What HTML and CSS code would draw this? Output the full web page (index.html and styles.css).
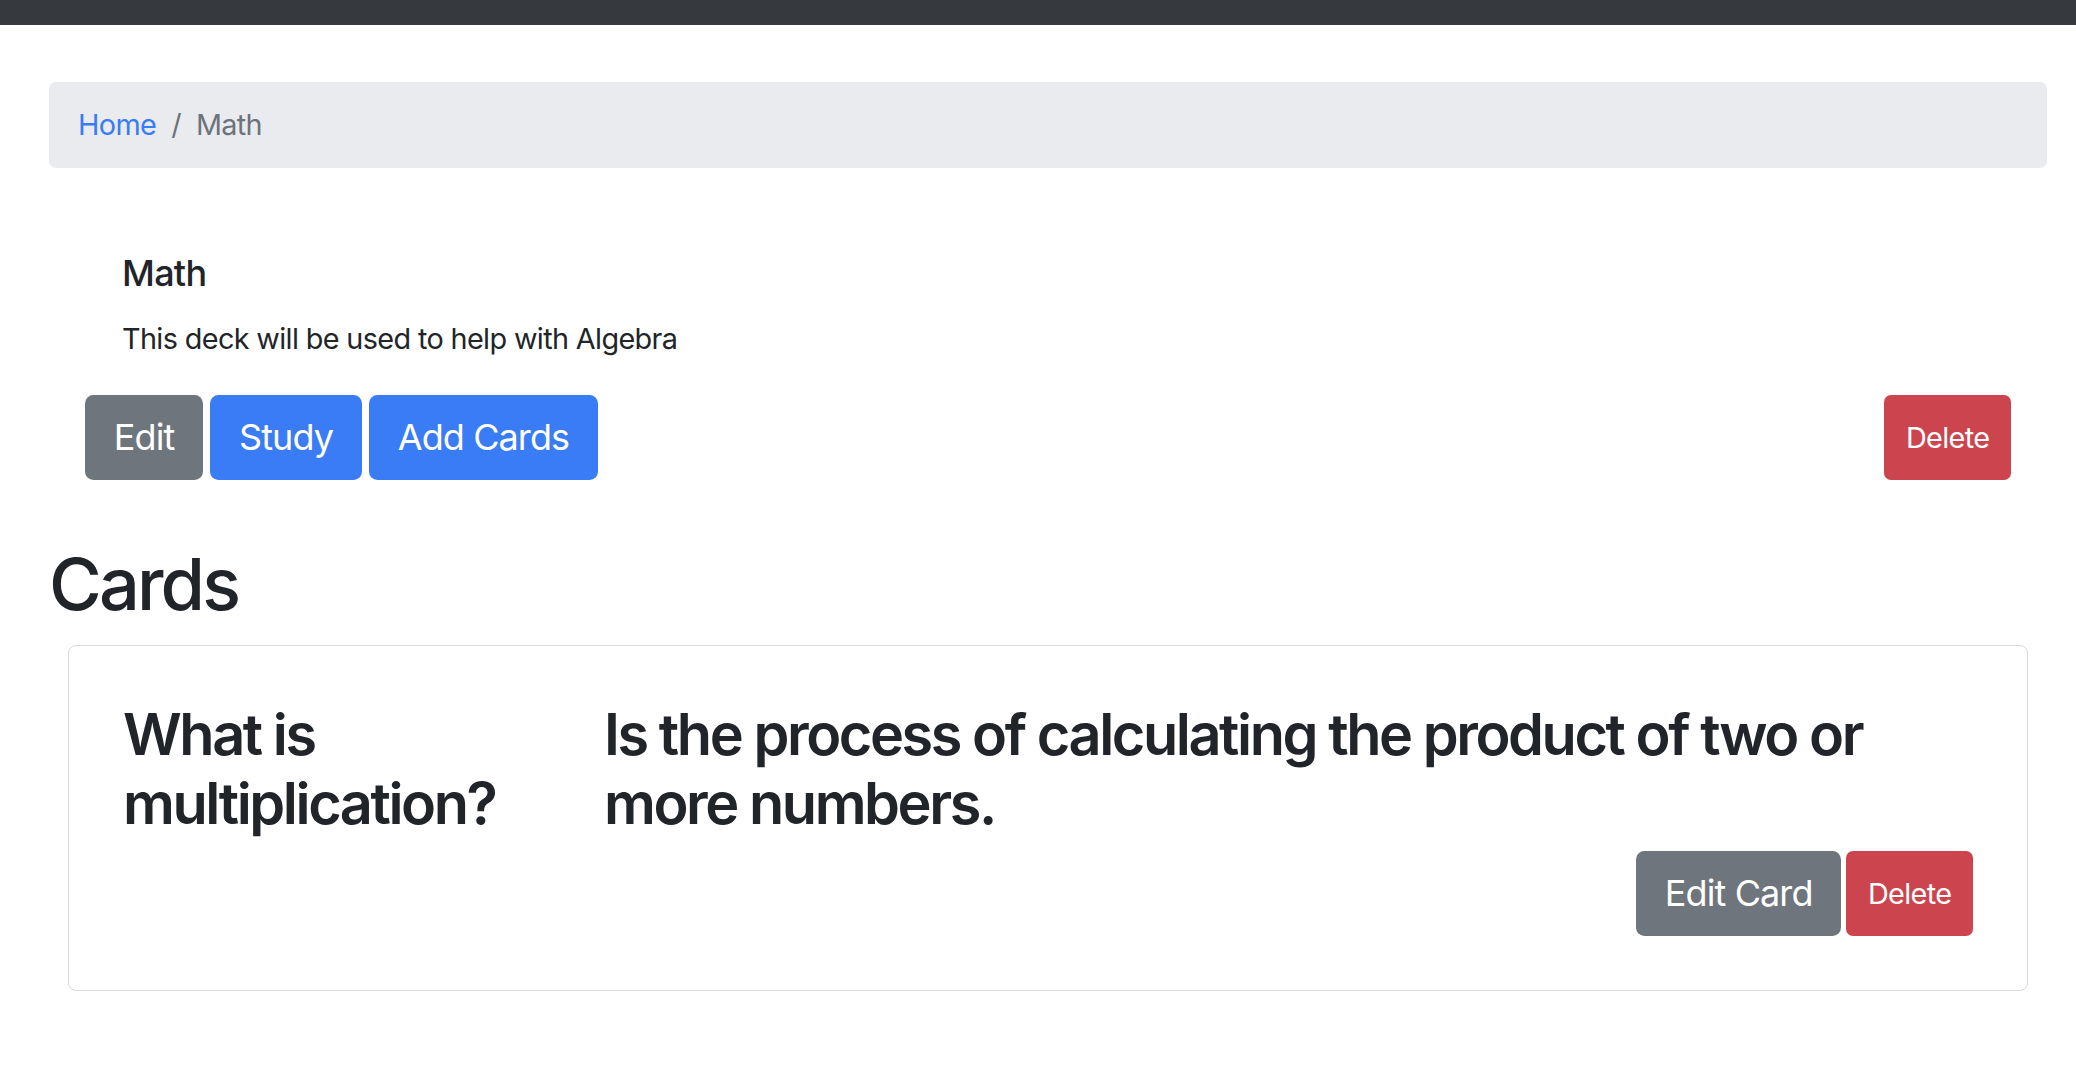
FILE: index.html
```html
<!DOCTYPE html>
<html lang="en">
<head>
<meta charset="utf-8">
<title>Math</title>
<link rel="stylesheet" href="styles.css">
</head>
<body>
<div class="topbar"></div>
<main class="container">
  <nav class="breadcrumb">
    <a class="crumb-link" href="#">Home</a>
    <span class="crumb-sep">/</span>
    <span class="crumb-current">Math</span>
  </nav>

  <section class="deck">
    <div class="deck-info">
      <h5 class="deck-title">Math</h5>
      <p class="deck-desc">This deck will be used to help with Algebra</p>
    </div>
    <div class="deck-actions">
      <div class="btn-group">
        <a class="btn btn-lg btn-secondary" href="#">Edit</a>
        <a class="btn btn-lg btn-primary" href="#">Study</a>
        <a class="btn btn-lg btn-primary" href="#">Add Cards</a>
      </div>
      <button class="btn btn-danger" type="button">Delete</button>
    </div>
  </section>

  <h1 class="section-title">Cards</h1>

  <div class="card">
    <div class="card-row">
      <h2 class="card-text">What is multiplication?</h2>
      <h2 class="card-text">Is the process of calculating the product of two or more numbers.</h2>
    </div>
    <div class="card-actions">
      <a class="btn btn-lg btn-secondary" href="#">Edit Card</a>
      <button class="btn btn-danger" type="button">Delete</button>
    </div>
  </div>
</main>
</body>
</html>
```

FILE: styles.css
```css
* { box-sizing: border-box; }

html, body {
  margin: 0;
  padding: 0;
  background: #ffffff;
}

body {
  font-family: "Inter", "Roboto", "Liberation Sans", sans-serif;
  font-size: 28.8px;
  line-height: 1.5;
  letter-spacing: -0.022em;
  color: #212529;
}

.topbar {
  height: 25px;
  background: #363a3f;
}

.container {
  padding: 0 29px 40px 49px;
}

.breadcrumb {
  margin-top: 57px;
  height: 86px;
  background: #e9ebee;
  border-radius: 7px;
  display: flex;
  align-items: center;
  padding: 0 29px;
  font-size: 28.8px;
}

.crumb-link {
  color: #3a7bf6;
  text-decoration: none;
}

.crumb-sep {
  color: #6c737b;
  padding: 0 15px;
}

.crumb-current {
  color: #6c737b;
}

.deck {
  padding: 84px 36px 0 36px;
}

.deck-info {
  padding-left: 37px;
}

.deck-title {
  margin: 0 0 21.6px 0;
  font-size: 36px;
  line-height: 43px;
  font-weight: 500;
  letter-spacing: -0.02em;
}

.deck-desc {
  margin: 0;
  line-height: 43px;
}

.deck-actions {
  margin-top: 35px;
  display: flex;
  justify-content: space-between;
  align-items: stretch;
}

.btn-group {
  display: flex;
  gap: 7px;
}

.btn {
  display: inline-flex;
  align-items: center;
  justify-content: center;
  border: none;
  color: #ffffff;
  text-decoration: none;
  font-family: inherit;
  font-size: 28.8px;
  line-height: 1.5;
  letter-spacing: -0.022em;
  padding: 0 21.6px;
  border-radius: 7px;
  cursor: pointer;
}

.btn-lg {
  font-size: 36px;
  height: 85px;
  padding: 0 28.8px;
  border-radius: 8.5px;
  letter-spacing: -0.025em;
}

.btn-secondary { background: #6e757c; }
.btn-primary { background: #3a7bf6; }
.btn-danger { background: #cc454e; }

.section-title {
  margin: 61px 0 18px 0;
  font-size: 72px;
  line-height: 86px;
  font-weight: 500;
  letter-spacing: -0.04em;
}

.card {
  margin: 0 19px;
  border: 1px solid #d9d9d9;
  border-radius: 8px;
  padding: 54px;
}

.card-row {
  display: grid;
  grid-template-columns: 481px 1fr;
}

.card-text {
  margin: 0;
  font-size: 57.6px;
  line-height: 69px;
  font-weight: 600;
  letter-spacing: -0.042em;
}

.card-actions {
  margin-top: 13px;
  display: flex;
  justify-content: flex-end;
  align-items: stretch;
  gap: 5px;
}
```
